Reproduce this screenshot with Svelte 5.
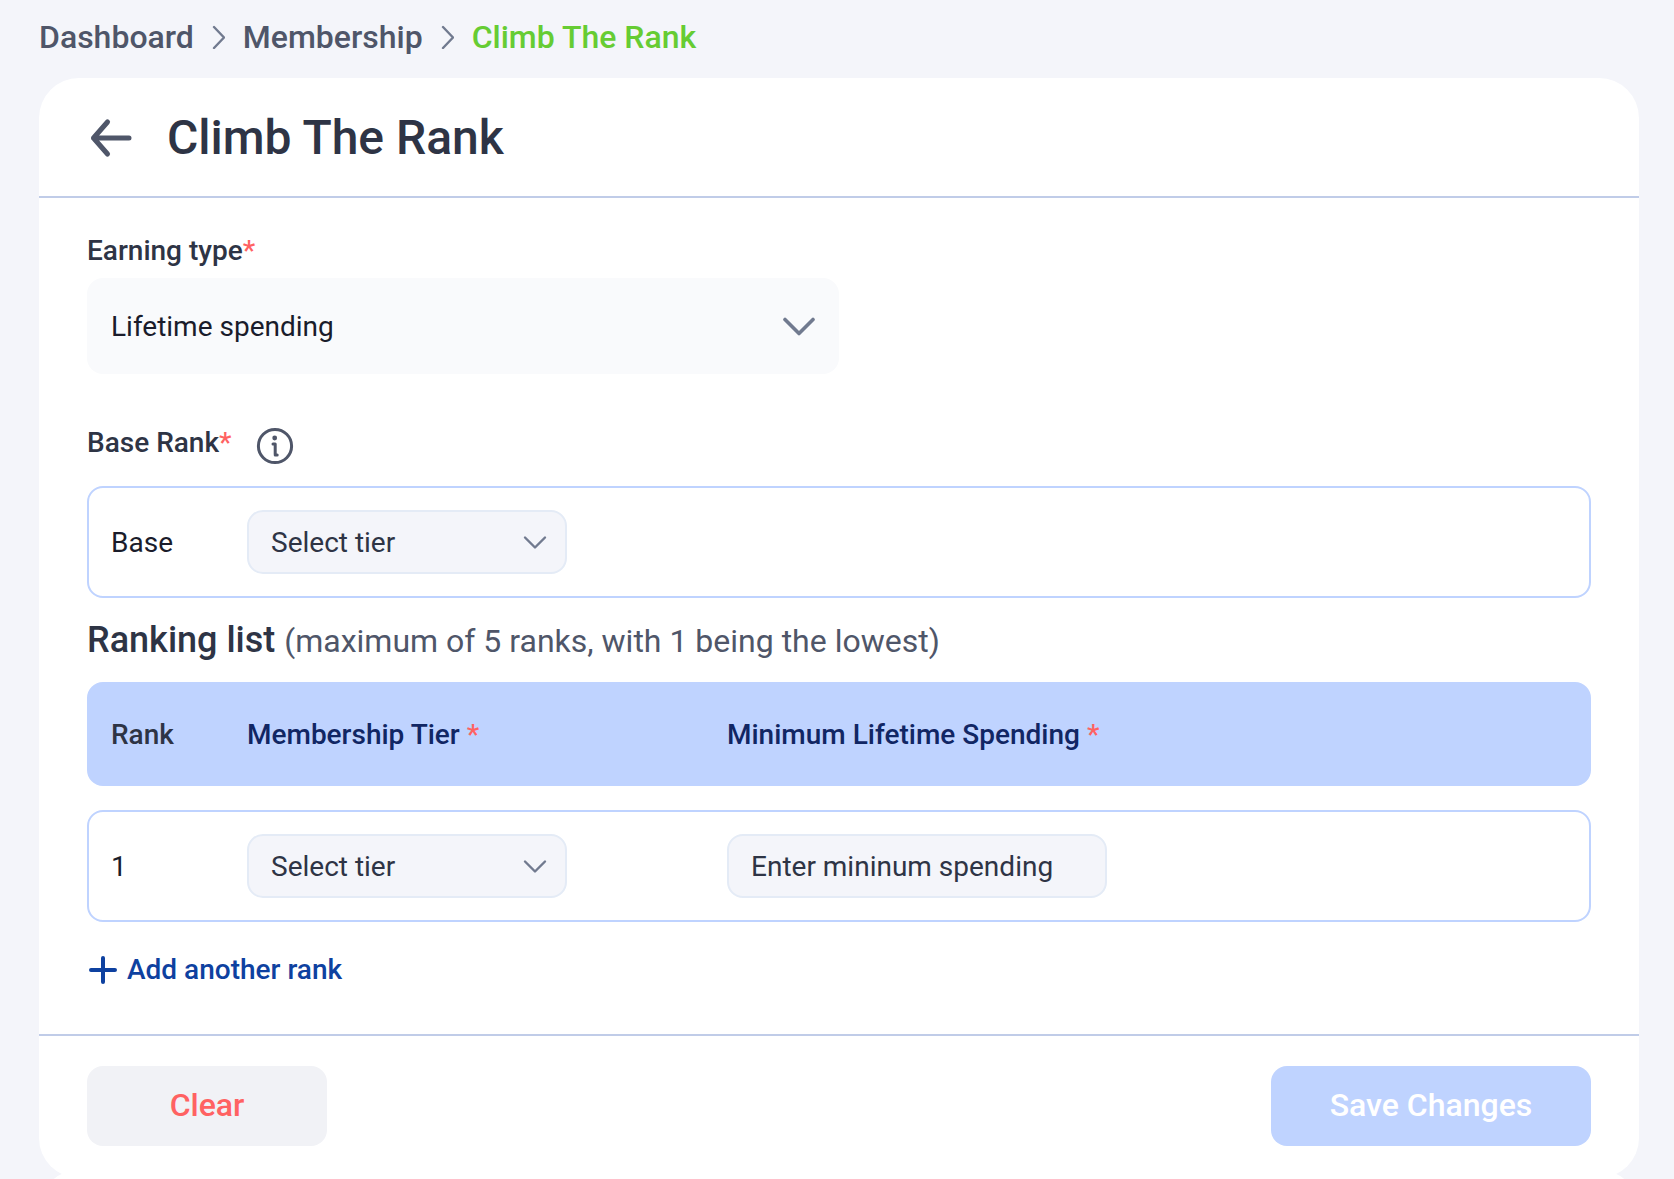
<script>
	const crumbs = [
		{ label: "Dashboard", href: "#dashboard" },
		{ label: "Membership", href: "#membership" }
	]
	const earningTypes = ["Lifetime spending", "Yearly spending"]
	const tiers = ["Silver", "Gold", "Platinum"]
	const maxRanks = 5

	let earningType = $state(earningTypes[0])
	let baseTier = $state("")
	let ranks = $state([{ tier: "", minimum: "" }])

	function addRank() {
		if (ranks.length < maxRanks) ranks.push({ tier: "", minimum: "" })
	}

	function clear() {
		baseTier = ""
		ranks = [{ tier: "", minimum: "" }]
	}
</script>

{#snippet chevron()}
	<svg class="chevron" width="24" height="16" viewBox="0 0 24 16" aria-hidden="true">
		<path d="M2 3.5l10 10 10-10" />
	</svg>
{/snippet}

<main>
	<nav aria-label="Breadcrumb">
		{#each crumbs as crumb}
			<a href={crumb.href}>{crumb.label}</a>
			<svg width="13" height="24" viewBox="0 0 13 24" aria-hidden="true">
				<path d="M2 2l10 10.5L2 23" />
			</svg>
		{/each}
		<a class="current" href="#rank" aria-current="page">Climb The Rank</a>
	</nav>

	<section class="card">
		<header>
			<button class="back" aria-label="Back">
				<svg width="48" height="48" viewBox="0 0 48 48" aria-hidden="true">
					<path d="M42 24H6.500M20.500 8L6.500 24l14 16" />
				</svg>
			</button>
			<h1>Climb The Rank</h1>
		</header>

		<div class="content">
			<label class="label" for="earning">Earning type<span class="required">*</span></label>
			<div class="select large">
				<select id="earning" bind:value={earningType}>
					{#each earningTypes as type}
						<option>{type}</option>
					{/each}
				</select>
				<svg class="chevron" width="32" height="20" viewBox="0 0 32 20" aria-hidden="true">
					<path d="M2 3.500l14 14 14-14" />
				</svg>
			</div>

			<div class="base-label">
				<label class="label" for="base">Base Rank<span class="required">*</span></label>
				<button class="info" aria-label="About the base rank">
					<svg width="40" height="40" viewBox="0 0 40 40" aria-hidden="true">
						<circle cx="20" cy="20" r="16.6" />
						<circle class="dot" cx="19.7" cy="12" r="2.4" />
						<path d="M18 18h2.2v10.6M20.2 28.9h2" />
					</svg>
				</button>
			</div>
			<div class="row">
				<span>Base</span>
				<div class="select">
					<select id="base" bind:value={baseTier}>
						<option value="">Select tier</option>
						{#each tiers as tier}
							<option>{tier}</option>
						{/each}
					</select>
					{@render chevron()}
				</div>
			</div>

			<h2>Ranking list <small>(maximum of {maxRanks} ranks, with 1 being the lowest)</small></h2>

			<table>
				<thead>
					<tr class="row head">
						<th class="rank">Rank</th>
						<th>Membership Tier <span class="required">*</span></th>
						<th>Minimum Lifetime Spending <span class="required">*</span></th>
					</tr>
				</thead>
				<tbody>
					{#each ranks as rank, i}
						<tr class="row">
							<td class="number">{i + 1}</td>
							<td>
								<div class="select">
									<select aria-label="Membership tier" bind:value={rank.tier}>
										<option value="">Select tier</option>
										{#each tiers as tier}
											<option>{tier}</option>
										{/each}
									</select>
									{@render chevron()}
								</div>
							</td>
							<td>
								<input
									aria-label="Minimum lifetime spending"
									placeholder="Enter mininum spending"
									bind:value={rank.minimum}
								/>
							</td>
						</tr>
					{/each}
				</tbody>
			</table>

			<button class="add" onclick={addRank}>
				<svg width="32" height="32" viewBox="0 0 32 32" aria-hidden="true">
					<path d="M16 4v24M4 16h24" />
				</svg>
				Add another rank
			</button>
		</div>

		<footer>
			<button class="clear" onclick={clear}>Clear</button>
			<button class="save">Save Changes</button>
		</footer>
	</section>

	<!-- top edge of the next card, tucked under this one -->
	<div class="next">
		<div class="next-card"></div>
	</div>
</main>

<style>
	:global(body) {
		background-color: #f4f5fa;
	}
	main {
		box-sizing: border-box;
		min-height: 100vh;
		padding: 18px 35px 0 39px;
		display: flex;
		flex-direction: column;
		font-family: Roboto, "Liberation Sans", sans-serif;
		font-size: 28px;
		line-height: 32px;
		color: #1a1c2b;
	}
	button,
	select,
	input {
		box-sizing: border-box;
		margin: 0;
		padding: 0;
		border: none;
		background: none;
		font: inherit;
		color: inherit;
	}
	button {
		cursor: pointer;
	}
	svg {
		display: block;
		flex: none;
		fill: none;
		stroke: #717a8f;
		stroke-width: 2.4;
		stroke-linecap: round;
		stroke-linejoin: round;
	}
	nav {
		display: flex;
		align-items: center;
		gap: 18px;
		margin-bottom: 22px;
		font-size: 32px;
		line-height: 38px;
		font-weight: 500;
	}
	nav a {
		color: #4f5669;
		text-decoration: none;
	}
	nav .current {
		color: #66cc33;
	}
	.card {
		border-radius: 40px;
		background-color: white;
	}
	header {
		display: flex;
		align-items: center;
		gap: 32px;
		padding: 32px 48px 30px;
		border-bottom: solid 2px #c0cce8;
	}
	.back svg {
		stroke: #4f5669;
		stroke-width: 5;
	}
	h1 {
		margin: 0;
		font-size: 48px;
		line-height: 56px;
		font-weight: 500;
		color: #2e3445;
	}
	.content {
		padding: 36px 48px 48px;
	}
	.label {
		display: block;
		line-height: 34px;
		font-weight: 500;
		color: #2e3445;
	}
	.required {
		color: #ff6262;
	}
	.select {
		position: relative;
		width: 320px;
	}
	.select select {
		width: 100%;
		appearance: none;
		cursor: pointer;
	}
	.select .chevron {
		position: absolute;
		right: 20px;
		top: 50%;
		transform: translateY(-50%);
		pointer-events: none;
	}
	.select select,
	input {
		height: 64px;
		padding: 0 22px;
		border: solid 2px #e4ebf6;
		border-radius: 16px;
		background-color: #f4f5fa;
		color: #2e3445;
	}
	.select select {
		padding-top: 2px;
	}
	input {
		width: 380px;
	}
	input::placeholder {
		color: #2e3445;
		opacity: 1;
	}
	.large {
		width: 50%;
		margin-top: 10px;
	}
	.large select {
		height: 96px;
		padding: 2px 24px 0;
		border: none;
		background-color: #f9fafc;
		color: #1a1c2b;
	}
	.large .chevron {
		right: 24px;
		stroke-width: 3.6;
	}
	.base-label {
		display: flex;
		align-items: flex-start;
		gap: 24px;
		margin: 52px 0 20px;
	}
	.info svg {
		stroke: #4f5669;
		stroke-width: 3;
	}
	.info .dot {
		fill: #4f5669;
		stroke: none;
	}
	.row {
		box-sizing: border-box;
		display: grid;
		grid-template-columns: 136px 480px 1fr;
		align-items: center;
		padding: 22px;
		border: solid 2px #bfd3ff;
		border-radius: 16px;
	}
	h2 {
		margin: 20px 0;
		font-size: 36px;
		line-height: 44px;
		font-weight: 500;
		color: #2e3445;
	}
	h2 small {
		font-size: 32px;
		line-height: 32px;
		font-weight: 400;
		color: #4f5669;
	}
	table,
	thead,
	tbody {
		display: grid;
		gap: 24px;
	}
	th,
	td {
		padding: 0;
		text-align: left;
	}
	.row > span,
	.number,
	th {
		padding-top: 2px;
	}
	.head {
		padding: 33px 22px;
		background-color: #bfd3ff;
	}
	th {
		font-weight: 500;
		color: #112664;
	}
	th.rank {
		color: #2e3445;
	}
	.add {
		display: flex;
		align-items: center;
		gap: 8px;
		margin-top: 32px;
		font-weight: 500;
		color: #0e41a0;
	}
	.add svg {
		stroke: #0e41a0;
		stroke-width: 4;
	}
	footer {
		display: flex;
		justify-content: space-between;
		padding: 30px 48px 32px;
		border-top: solid 2px #c0cce8;
	}
	footer button {
		height: 80px;
		padding-bottom: 2px;
		border-radius: 16px;
		font-size: 32px;
		font-weight: 500;
	}
	.clear {
		width: 240px;
		background-color: #f1f2f6;
		color: #ff6262;
	}
	.save {
		width: 320px;
		background-color: #bfd3ff;
		color: white;
	}
	.next {
		flex: 1 1 0px;
		min-height: 0;
		margin-top: -8px;
		overflow: hidden;
	}
	.next-card {
		height: 80px;
		border-radius: 40px;
		background-color: white;
	}
</style>
